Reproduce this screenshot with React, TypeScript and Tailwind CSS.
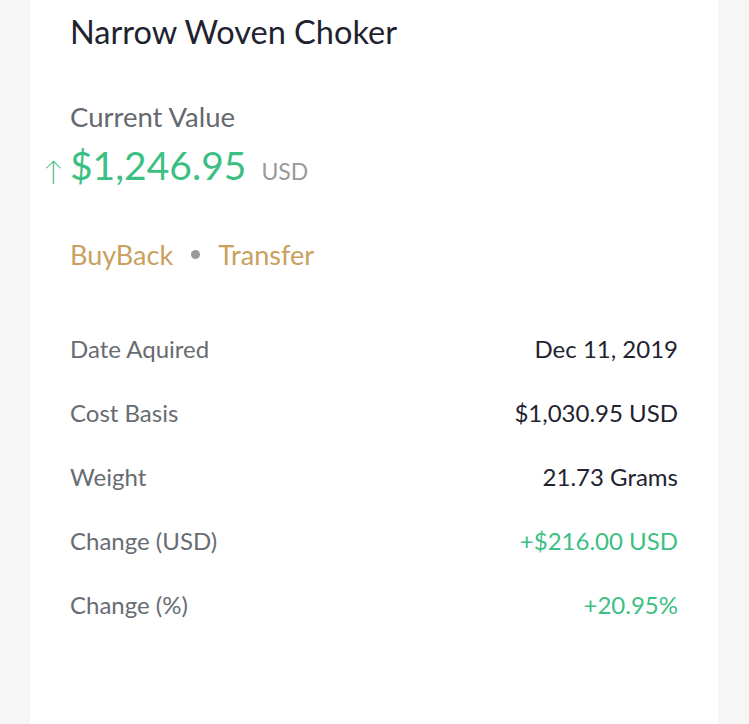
import React from "react"

const rows = [
  { label: "Date Aquired", value: "Dec 11, 2019" },
  { label: "Cost Basis", value: "$1,030.95 USD" },
  { label: "Weight", value: "21.73 Grams" },
  { label: "Change (USD)", value: "+$216.00 USD", up: true },
  { label: "Change (%)", value: "+20.95%", up: true },
]

export default function App() {
  return (
    <div className="min-h-[724px] bg-[#f6f6f6] px-[30px] font-['Lato',sans-serif]">
      <div className="min-h-[724px] w-[688px] bg-white px-10 pt-[12px]">
        <h1 className="text-[32.5px] leading-[40px] text-[#1f2330]">Narrow Woven Choker</h1>

        <div className="mt-[48px] text-[27.5px] leading-[34px] text-[#65696f]">Current Value</div>
        <div className="relative mt-[8px] flex items-baseline">
          <span className="absolute -left-[27px] top-[6px] text-[27px] leading-[46px] font-light text-[#3dbf83]">↑</span>
          <span className="text-[39px] leading-[46px] text-[#3dbf83]">$1,246.95</span>
          <span className="ml-[15px] text-[23px] text-[#9a9a9a]">USD</span>
        </div>

        <div className="mt-[48px] flex items-center text-[27px] leading-[36px] text-[#c9a060]">
          <span>BuyBack</span>
          <span className="mx-[18px] h-[9px] w-[9px] rounded-full bg-[#9a9a9a]" />
          <span>Transfer</span>
        </div>

        <div className="mt-[44px] flex flex-col">
          {rows.map((row) => (
            <div key={row.label} className="flex h-16 items-center justify-between text-[24px]">
              <span className="text-[#686c72]">{row.label}</span>
              <span className={row.up ? "text-[#3dbf83]" : "text-[#1f2330]"}>{row.value}</span>
            </div>
          ))}
        </div>
      </div>
    </div>
  )
}
